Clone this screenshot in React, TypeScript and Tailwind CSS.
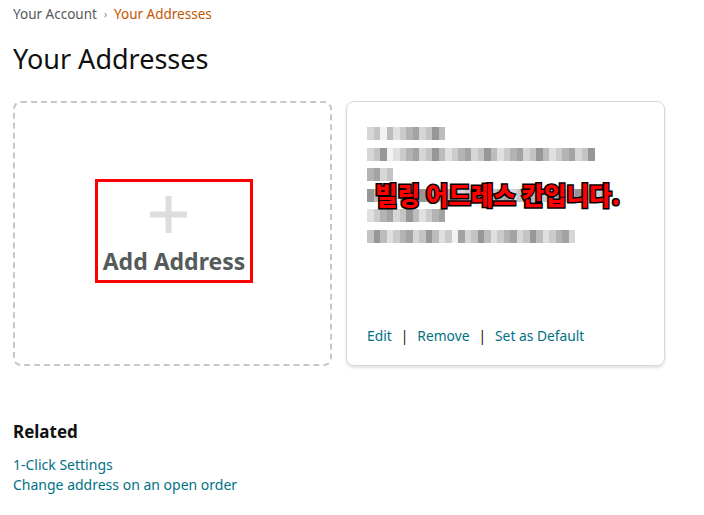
import React from "react";

// grey tones for the pixelated (blurred) address lines
const tones = ["#d6d6d6", "#c4c4c4", "#b3b3b3", "#a3a3a3", "#e0e0e0", "#cbcbcb", "#979797", "#bcbcbc"];

function mosaicRow(seed: number, width: number) {
    const cells: string[] = [];
    let s = seed;
    const n = Math.round(width / 6.5);
    for (let i = 0; i < n; i++) {
        s = (s * 9301 + 49297) % 233280;
        cells.push(tones[s % tones.length]);
    }
    return cells;
}

const rows = [
    { seed: 11, width: 78, gapAt: 2 },
    { seed: 27, width: 228, gapAt: 3 },
    { seed: 5, width: 23, gapAt: -1 },
    { seed: 41, width: 240, gapAt: 4 },
    { seed: 63, width: 78, gapAt: -1 },
    { seed: 88, width: 208, gapAt: 13 },
];

function BlurredLine({ seed, width, gapAt }: { seed: number; width: number; gapAt: number }) {
    const cells = mosaicRow(seed, width);
    return (
        <div className="flex h-[13px]">
            {cells.map((c, i) => (
                <div
                    key={i}
                    className="h-full w-[6.5px]"
                    style={{ backgroundColor: i === gapAt ? "#f2f2f2" : c }}
                />
            ))}
        </div>
    );
}

export default function App() {
    return (
        <div className="min-h-[515px] bg-white px-[13px] pt-[5px] font-['Noto_Sans',_'Open_Sans',_sans-serif] text-[#0f1111]">
            {/* Breadcrumb */}
            <div className="flex items-center gap-[7px] text-[13.5px] leading-[18px]">
                <span className="text-[#565959]">Your Account</span>
                <span className="text-[10px] text-[#888]">›</span>
                <span className="text-[#c45500]">Your Addresses</span>
            </div>

            <h1 className="mt-[21px] text-[27px] leading-[30px] font-normal">Your Addresses</h1>

            {/* Address cards */}
            <div className="mt-[27px] flex gap-[14px]">
                <div className="flex h-[265px] w-[319px] items-center justify-center rounded-[8px] border-2 border-dashed border-[#c7c7c7]">
                    <div className="mb-[5px] ml-[3px] flex h-[104px] w-[158px] flex-col items-center border-[3px] border-[#ff0000] pt-[14px]">
                        <svg className="mr-[12px]" width="37" height="37" viewBox="0 0 37 37">
                            <rect x="15.5" y="0" width="6" height="37" fill="#dddddd" />
                            <rect x="0" y="15.5" width="37" height="6" fill="#dddddd" />
                        </svg>
                        <span className="mt-[13px] text-[23px] leading-[30px] font-bold text-[#555b5b]">Add Address</span>
                    </div>
                </div>

                <div className="flex h-[265px] w-[319px] flex-col rounded-[8px] border border-[#d5d9d9] px-[20px] pb-[19px] pt-[25px] shadow-[0_2px_3px_rgba(0,0,0,0.12)]">
                    <div className="relative flex flex-col gap-[7.5px]">
                        {rows.map((r, i) => (
                            <BlurredLine key={i} seed={r.seed} width={r.width} gapAt={r.gapAt} />
                        ))}
                        <span className="absolute left-[8px] top-[53px] whitespace-nowrap font-['Noto_Sans_CJK_KR',_sans-serif] text-[24.5px] leading-[30px] font-black text-[#ff0000] [-webkit-text-stroke:3px_#000] [paint-order:stroke_fill]">
                            빌링 어드레스 칸입니다.
                        </span>
                    </div>

                    <div className="mt-auto flex items-center text-[13.8px] leading-[20px]">
                        <a className="text-[#007185]">Edit</a>
                        <span className="mx-[9px] text-[#0f1111]">|</span>
                        <a className="text-[#007185]">Remove</a>
                        <span className="mx-[9px] text-[#0f1111]">|</span>
                        <a className="text-[#007185]">Set as Default</a>
                    </div>
                </div>
            </div>

            {/* Related */}
            <h2 className="mt-[54px] text-[17px] leading-[24px] font-bold">Related</h2>
            <div className="mt-[11px] flex flex-col text-[14px] leading-[20px] text-[#007185]">
                <a>1-Click Settings</a>
                <a>Change address on an open order</a>
            </div>
        </div>
    );
}
